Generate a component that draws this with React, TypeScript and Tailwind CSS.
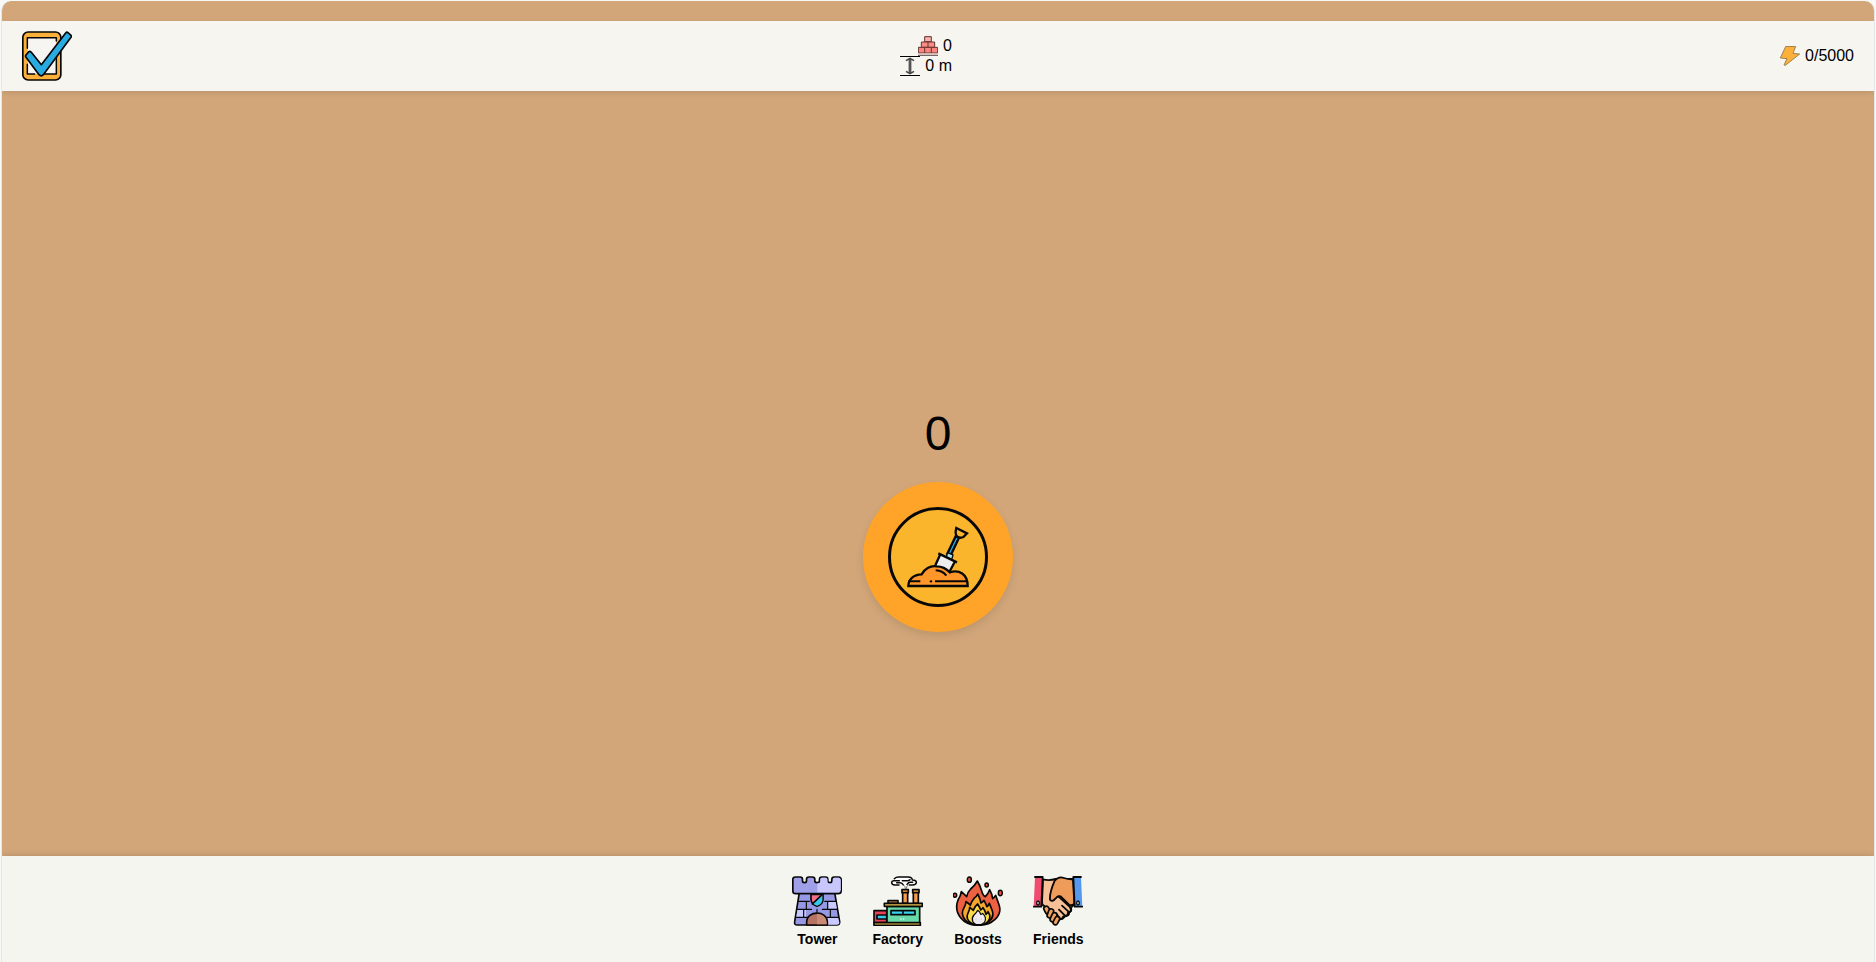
import type { ReactNode } from "react";

function CheckIcon() {
  return (
    <svg viewBox="0 0 150 150" className="size-[50px]" stroke="#050505" strokeLinejoin="round" strokeLinecap="round">
      <rect x="2.5" y="3" width="114" height="144" rx="16" fill="#fbb03b" strokeWidth="5" />
      <rect x="17" y="20" width="86" height="109" fill="#f6f5f2" stroke="none" />
      <path d="M16 52V20h87v10M103 73v56H59M16 100v29h22" fill="none" strokeWidth="4.5" />
      <path d="M137 4 147 13Q149 16 147 19L64 131Q58 138 51 131L12 79Q9 75 13 71L20 62Q24 60 28 64L58 101 131 6Q134 2 137 4Z" fill="#29abe2" strokeWidth="5" />
    </svg>
  );
}

function BrickIcon() {
  return (
    <svg viewBox="0 0 60 60" className="size-5" stroke="#65312f" strokeWidth="3">
      <path d="M20 2h20v15H20z" fill="#f7b2aa" />
      <path d="M10 18h40v16H10z" fill="#fa8c84" />
      <path d="M1 34h58v17H1z" fill="#fb857f" />
      <path d="M30 18v16M20 34v17M40 34v17" />
      <path d="M1 52h58v6H1z" fill="#d8c5bf" stroke="#c5aaa5" strokeWidth="1" />
      <path d="M0 58.5h60" stroke="#776663" />
    </svg>
  );
}

function HeightIcon() {
  return (
    <svg viewBox="0 0 60 60" className="size-5" fill="none">
      <path d="M0 1.5h60M0 58.5h60" stroke="#000" strokeWidth="3.4" />
      <path d="M30 9v42" stroke="#777" strokeWidth="9" />
      <path d="M30 9v42" stroke="#444" strokeWidth="4" />
      <path d="m18 14 12-7 12 7M18 46l12 7 12-7" stroke="#444" strokeWidth="4.5" />
    </svg>
  );
}

function BoltIcon() {
  return (
    <svg viewBox="0 0 60 60" className="size-5">
      <path d="M17 1.5h30L39 22l20 2-43 34-4-1 9-19-20-2Z" fill="#fbb03b" stroke="#927546" strokeWidth="2.6" strokeLinejoin="round" />
    </svg>
  );
}

function DigIcon() {
  return (
    <svg viewBox="0 0 300 300" className="size-[100px]" stroke="#080808" strokeLinejoin="miter" strokeWidth="7">
      <circle cx="150" cy="150" r="145.5" fill="#fbb52d" strokeWidth="9" />
      <path d="M203 88 178 140 188 145 213 92Z" fill="#29abe2" strokeWidth="7" />
      <path d="m205 63 32 16-11 11q-10 5-19-2-7-7-2-25Z" fill="#fbb52d" />
      <path d="m179 137 16 7-4 14-16-8Z" fill="#a5e6ed" strokeWidth="4" />
      <path d="m156 143 44 22-16 29-45-20Z" fill="#eee" stroke="none" />
      <path d="m151 139 56 27M156 144l-14 31M200 165l-16 30" fill="none" strokeWidth="7" />
      <path d="M61 237c0-20 15-34 40-35 8-16 25-27 45-24 18 0 30 8 39 18 28-9 54 4 54 41Z" fill="#ff962a" strokeWidth="7" />
      <path d="M61 223h36M141 223h97" strokeWidth="6" />
      <path d="M143 190q21 1 32 16" fill="none" strokeWidth="6" />
      <circle cx="129" cy="223" r="3.5" fill="#080808" stroke="none" />
    </svg>
  );
}

function TowerIcon() {
  return (
    <svg viewBox="0 0 150 150" className="size-[50px]" stroke="#080808" strokeWidth="5" strokeLinejoin="round" strokeLinecap="round">
      <path d="M22 50h106l15 87q1 10-9 10H16q-10 0-8-10Z" fill="#9698e4" />
      <path d="M17 100h25v23H13zM107 77h24l4 21h-28zM107 125h31l4 14q1 7-8 7h-27z" fill="#c9caff" stroke="none" />
      <path d="M2.5 10q0-7 8-7h14q7 0 7 7v5q0 5 6 5t6-5v-5q0-7 7-7h11q7 0 7 7v5q0 5 7 5t7-5v-5q0-7 7-7h11q7 0 7 7v5q0 5 6 5t6-5v-5q0-7 7-7h13q8 0 8 8v33q0 9-9 9H11q-8.5 0-8.5-9Z" fill="#9fa0e8" />
      <path d="M76 22.500q9 0 9-7.500v-5q0-4.500 4.500-4.500h12q5 0 5 5v5q0 7.500 8 7.500t8-7.500v-5q0-5 5-5h12q7 0 7 7v29q0 7-7 7H76Z" fill="#c8c6fa" stroke="none" />
      <path d="M18 76h34M98 76h33M15 100h44M91 100h44M11 124h35M105 124h34M43 77v22M107 77v22M35 100v23M75 100v9M115 100v23" fill="none" strokeWidth="3.5" />
      <path d="M44 147v-8c0-37 62-37 62 0v8Z" fill="#b67363" />
      <path d="M75 113v32h29v-6q-2-24-29-26Z" fill="#c98a76" stroke="none" />
      <path d="M57 55h36v16q-1 14-18 20-17-6-18-20Z" fill="#f46e85" />
      <path d="M91 57v16q-1 12-16 16-9-3-13-7Z" fill="#35c9ed" stroke="none" />
      <path d="m61 84 30-29" />
    </svg>
  );
}

function FactoryIcon() {
  return (
    <svg viewBox="0 0 150 150" className="size-[50px]" stroke="#080808" strokeWidth="5" strokeLinejoin="round" strokeLinecap="round">
      <path d="M84 25H65q-9 0-9-7 0-6 9-7 1-9 12-9h29q10 0 12 9 12 0 12 7 0 7-10 7h-11l-10 9q-5 5-9-1Z" fill="#fff" stroke="none" />
      <path d="M78 27H65q-9 0-9-8 0-4 6-5h17M64 8q5-5 13-5h29q11 0 12 9 12 0 12 7 0 8-12 8h-9M88 14h15q5 0 8-3M71 20h10q7 0 10 7M119 19h-7q-6 0-10 6" fill="none" strokeWidth="4.5" />
      <path d="M92 27q5 3 5 10M105 27q-5 3-5 10" fill="none" stroke="#777" strokeWidth="3" />
      <path d="M89 43h15v39H89zM121 43h15v39h-15z" fill="#f49b52" />
      <path d="M87 41h19v9H87zM119 41h19v9h-19z" fill="#ffb14c" />
      <path d="M45 74h30v8H45z" fill="#ef9b51" />
      <path d="M3 104h38v36H3z" fill="#e94155" />
      <path d="M12 117h29v12H12z" fill="#35c9ed" />
      <path d="M42 91h98v51H42z" fill="#68d9a8" />
      <path d="M34 82h114v9H34z" fill="#e9c24e" />
      <path d="M3 140h139v8H3z" fill="#e9c24e" />
      <path d="M54 104h72v12H54zM90 104v12" fill="#35d4f1" />
      <path d="M84 128v2M92 128v2" stroke="#d7fff1" strokeWidth="4" />
    </svg>
  );
}

function FireIcon() {
  return (
    <svg viewBox="0 0 150 150" className="size-[50px]" stroke="#080808" strokeWidth="5" strokeLinejoin="round">
      <path d="M76 147C32 150 0 113 15 72q8-12 10-25 11 10 16 15 2-13 12-23Q66 28 73 15q7 11 13 30 4 14 11 17 9-10 13-21 7 12 9 27 6-5 9-10 5 14 10 28c12 34-23 64-62 61Z" fill="#ed6041" />
      <path d="M76 146c-34 3-58-24-43-51q5-7 6-18 9 5 13 11 4-13 13-23 6-4 9-11 7 12 10 27 5-2 9-8 5 9 9 19 5-4 7-10 5 11 9 23c8 23-17 43-42 41Z" fill="#f5a72e" />
      <path d="M77 146c-25 2-42-16-31-37q4-6 4-15 8 6 11 9 4-12 13-19 6 10 9 18 4-2 7-7 7 9 9 20 5-4 6-8c15 21-3 41-28 39Z" fill="#fbd947" />
      <path d="M76 146c-18 0-23-18-13-29 6-6 9-9 11-14q7 4 9 12 4-1 6-3c15 15 9 34-13 34Z" fill="#eeeaf0" strokeWidth="3.5" />
      <path d="M69 128v3M85 128v3" stroke="#cdbfd0" strokeWidth="3" />
      <g fill="#e95645" strokeWidth="4.5">
        <ellipse cx="49" cy="11" rx="6" ry="8" />
        <ellipse cx="101" cy="27" rx="5" ry="6" />
        <ellipse cx="142" cy="51" rx="6" ry="8" />
        <ellipse cx="6" cy="58" rx="5" ry="6" />
      </g>
    </svg>
  );
}

function HandsIcon() {
  return (
    <svg viewBox="0 0 150 150" className="size-[50px]" stroke="#080808" strokeWidth="5.5" strokeLinejoin="round" strokeLinecap="round">
      <path d="M30 10q18 5 38-1l52 0 3 75q-4 9-11 12 6 11-7 14-1 13-14 11-4 12-14 8-5 15-15 11L43 110 35 91q-10-5-8-14Z" fill="#f8c097" />
      <path d="M65 14q12-14 28-8 14 5 27 4l4 73q-7 7-15 4L83 61q-10-2-16 7-9 12-16 3Q49 52 65 14Z" fill="#ef9b5a" />
      <path d="m76 61 35 32q9 9-2 16l-22-20M109 109q-1 12-13 10L78 101M95 120q-3 11-14 8L69 112" fill="none" />
      <g fill="#f1a05f" strokeWidth="5">
        <rect x="35" y="90" width="15" height="25" rx="7.5" transform="rotate(-28 42 103)" />
        <rect x="44" y="98" width="15" height="28" rx="7.5" transform="rotate(20 51 114)" />
        <rect x="54" y="109" width="15" height="29" rx="7.5" transform="rotate(24 61 124)" />
        <rect x="63" y="121" width="14" height="26" rx="7" transform="rotate(28 70 134)" />
      </g>
      <path d="M6 3h23L25 92H2Z" fill="#ef4c70" stroke="none" />
      <path d="M6 3h23l-4 89H2" fill="none" />
      <path d="M121 3h23l4 89h-23Z" fill="#5598ee" stroke="none" />
      <path d="M144 3h-23l4 89h23" fill="none" />
      <ellipse cx="15" cy="81" rx="4" ry="6" fill="#eee" strokeWidth="4" />
      <ellipse cx="135" cy="81" rx="4" ry="6" fill="#eee" strokeWidth="4" />
    </svg>
  );
}

function NavItem({ label, children }: { label: string; children: ReactNode }) {
  return (
    <button className="flex flex-col items-center gap-[5px] text-sm leading-4 font-bold">
      {children}
      <span>{label}</span>
    </button>
  );
}

export default function App() {
  return (
    <div className="h-[962px] bg-[#f7f8f8] px-px pt-px font-['Liberation_Sans',Arial,sans-serif] text-black">
      <div className="flex h-[961px] flex-col overflow-hidden rounded-t-[10px] border-x border-[#e5e6e8] bg-[#d2a679] pt-5">
        <header className="z-10 grid h-[70px] shrink-0 grid-cols-3 items-center bg-[#f6f5f0] px-5 shadow-[0_2px_5px_rgba(0,0,0,0.1)]">
          <CheckIcon />
          <div className="mr-6 flex w-[52px] flex-col items-end justify-self-center text-base leading-5">
            <div className="flex items-center gap-[5px]"><BrickIcon />0</div>
            <div className="flex items-center gap-[5px]"><HeightIcon />0 m</div>
          </div>
          <div className="flex items-center justify-end gap-[5px] text-base leading-5"><BoltIcon />0/5000</div>
        </header>
        <main className="flex grow flex-col items-center pt-[315px]">
          <div className="mb-5 text-5xl leading-[56px]">0</div>
          <button className="flex size-[150px] items-center justify-center rounded-full bg-[#ffa428] shadow-[0_4px_8px_rgba(0,0,0,0.1)]">
            <DigIcon />
          </button>
        </main>
        <nav className="flex h-[106px] shrink-0 items-start justify-center gap-[30px] bg-[#f5f5f0] pt-5 shadow-[0_-2px_5px_rgba(0,0,0,0.1)]">
          <NavItem label="Tower"><TowerIcon /></NavItem>
          <NavItem label="Factory"><FactoryIcon /></NavItem>
          <NavItem label="Boosts"><FireIcon /></NavItem>
          <NavItem label="Friends"><HandsIcon /></NavItem>
        </nav>
      </div>
    </div>
  );
}
